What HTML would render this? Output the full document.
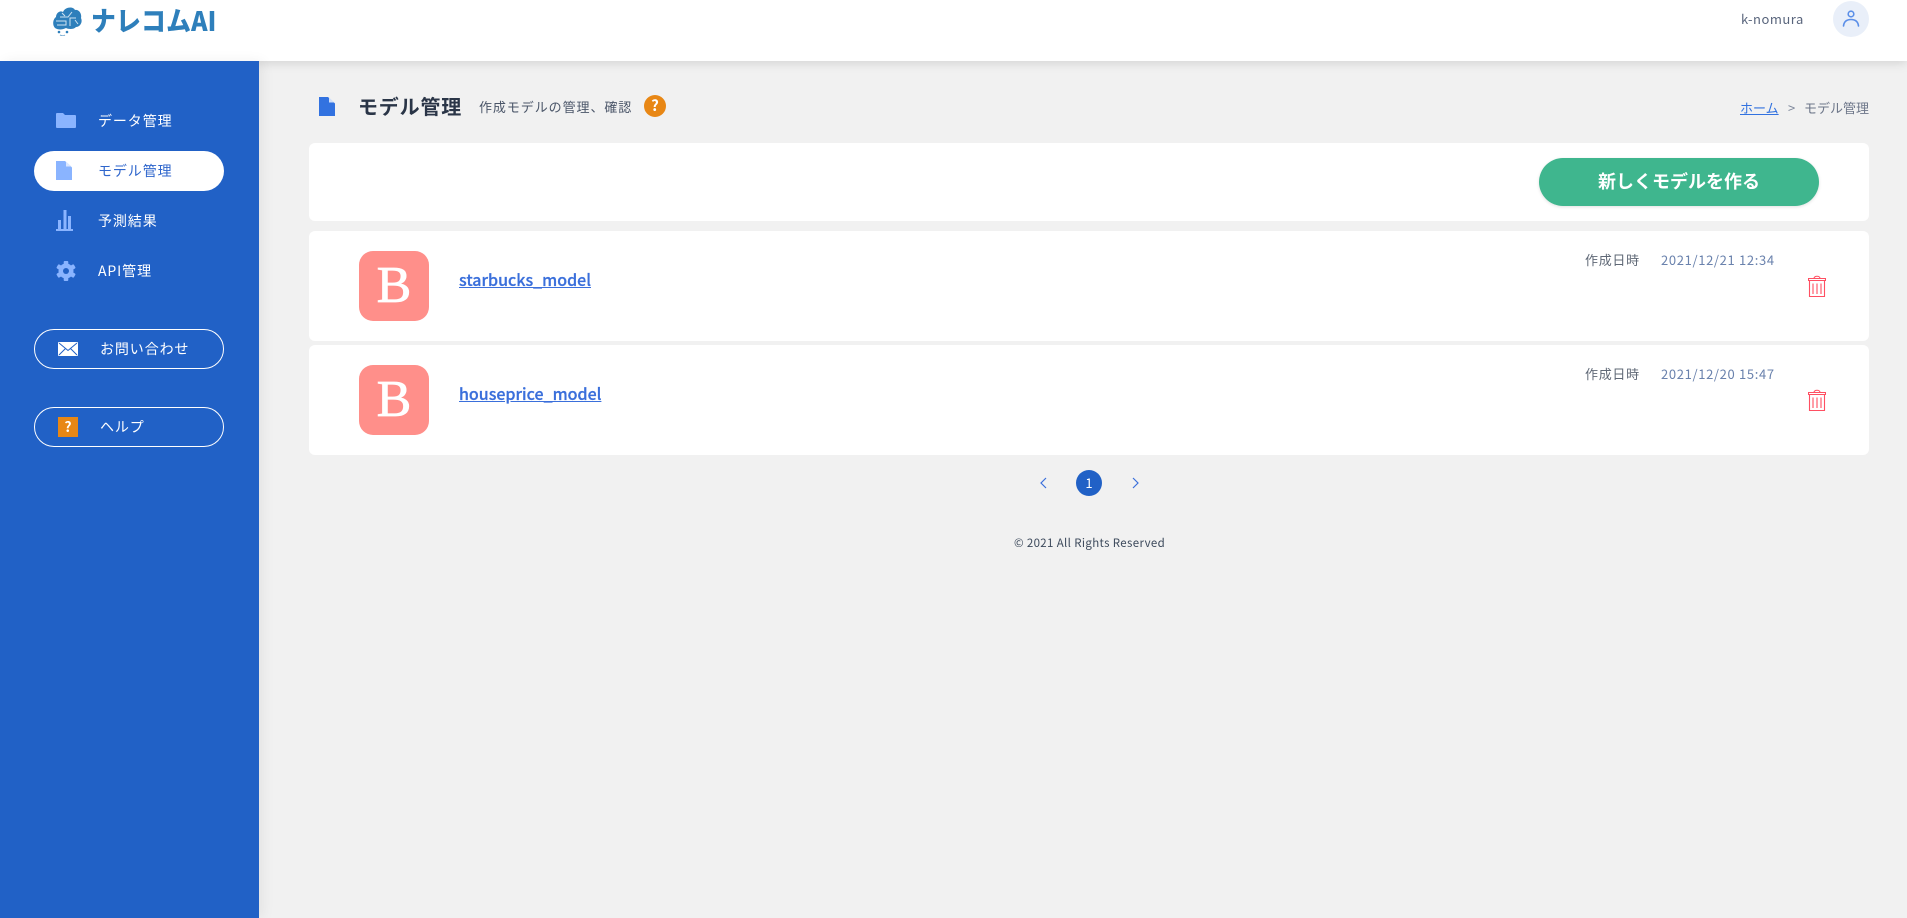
<!DOCTYPE html>
<html lang="ja"><head><meta charset="utf-8"><title>モデル管理</title>
<style>
*{box-sizing:border-box}
html,body{margin:0;padding:0}
body{position:relative;width:1907px;height:918px;overflow:hidden;background:#f1f1f1;font-family:"Noto Sans CJK JP","Liberation Sans",sans-serif;color:#2a3547}
.a{position:absolute;white-space:nowrap;line-height:20px}
svg{position:absolute;display:block}
.card{position:absolute;left:309px;width:1560px;background:#fff;border-radius:6px}
.nav{font-size:14px;letter-spacing:.9px;color:#fff}
.pill{position:absolute;left:34px;width:190px;height:40px;border-radius:20px}
.badge{position:absolute;left:359px;width:70px;height:70px;border-radius:14px;background:#ff8f8a;color:#fff;font:52px/70px "Liberation Serif",serif;text-align:center;-webkit-text-stroke:.7px #fff}
.link{font-size:16px;font-weight:500;color:#3a6fdb;text-decoration:underline;-webkit-text-stroke:.25px #3a6fdb}
.lab{font-size:13px;letter-spacing:.7px;color:#5f6876}
.date{font-size:13px;letter-spacing:.65px;color:#6a82ad}
</style></head><body>

<div class="a" style="left:0;top:0;width:1907px;height:61px;background:#fff;box-shadow:0 2px 10px rgba(0,0,0,.13)"></div>
<div class="a" style="left:0;top:61px;width:259px;height:857px;background:#2161c6;box-shadow:4px 0 12px rgba(0,0,0,.06)"></div>

<svg style="left:53px;top:7px" width="29" height="29" viewBox="0 0 29 29"><path d="M2 21C-1 18 0 12 3 10 3 6 7 3 10 5 12 0 20-1 22 3 26 2 29 7 28 11 30 15 27 20 23 20 20 23 15 22 13 21 9 23 5 23 2 21Z" fill="#2e7fbb"/><path d="M3 14H13V18H4M7 10H15L19 5M17 19V11H23M22 13 25 17M9 6 12 9" fill="none" stroke="#cfe3f2" stroke-width="1"/><circle cx="6" cy="25" r="1.300" fill="#2e7fbb"/><circle cx="14" cy="25" r="1.300" fill="#2e7fbb"/><path d="M7 28Q10 29.500 12 28" stroke="#7fb1d6" fill="none"/></svg>
<div class="a" style="left:91px;top:6px;line-height:28px;font-size:27px;font-weight:900;color:#2e7fbb;letter-spacing:.2px;transform:scaleX(.92);transform-origin:0 50%">ナレコムAI</div>

<div class="a" style="left:1741px;top:9px;font-size:13px;letter-spacing:.5px;color:#59657c">k-nomura</div>
<div class="a" style="left:1833px;top:1px;width:36px;height:36px;border-radius:50%;background:#e9eff9"></div>
<svg style="left:1841px;top:9px" width="20" height="20" viewBox="0 0 20 20" fill="none" stroke="#5b8fe8" stroke-width="1.600"><circle cx="10" cy="5" r="2.800"/><path d="M2.500 17C3 12.500 6 10.500 10 10.500S17 12.500 17.500 17" stroke-linecap="round"/></svg>

<svg style="left:56px;top:113px" width="20" height="15" viewBox="0 0 20 15"><path d="M1 0H7L9 2H19Q20 2 20 3V14Q20 15 19 15H1Q0 15 0 14V1Q0 0 1 0Z" fill="#8ab4ff"/></svg>
<div class="a nav" style="left:98px;top:111px">データ管理</div>

<div class="pill" style="top:151px;background:#fff"></div>
<svg style="left:56px;top:161px" width="16" height="19" viewBox="0 0 16 19"><path d="M0 0H9L16 6.500V19H0Z" fill="#8ab4ff"/><path d="M10 .5 15.500 5.500H10Z" fill="#dbe7ff"/></svg>
<div class="a nav" style="left:98px;top:161px;color:#2f66cc">モデル管理</div>

<svg style="left:56px;top:210px" width="17" height="21" viewBox="0 0 17 21" fill="#8ab4ff"><rect x="2" y="10" width="3" height="9"/><rect x="7.500" y="0" width="3" height="19"/><rect x="12" y="6" width="3" height="13"/><rect x="0" y="19" width="17" height="2"/></svg>
<div class="a nav" style="left:98px;top:211px">予測結果</div>

<svg style="left:56px;top:261px" width="20" height="20" viewBox="0 0 20 20"><g fill="#8ab4ff"><circle cx="10" cy="10" r="7.500"/><rect x="7.700" y="0" width="4.600" height="20" rx="1"/><rect x="7.700" y="0" width="4.600" height="20" rx="1" transform="rotate(60 10 10)"/><rect x="7.700" y="0" width="4.600" height="20" rx="1" transform="rotate(120 10 10)"/></g><circle cx="10" cy="10" r="3" fill="#2161c6"/></svg>
<div class="a nav" style="left:98px;top:261px">API管理</div>

<div class="pill" style="top:329px;border:1px solid #fff"></div>
<svg style="left:58px;top:342px" width="20" height="14" viewBox="0 0 20 14"><rect width="20" height="14" rx="1" fill="#fff"/><path d="M1 1 10 8.500 19 1M1 13 7.500 6.500M19 13 12.500 6.500" fill="none" stroke="#2161c6" stroke-width="1"/></svg>
<div class="a nav" style="left:100px;top:339px">お問い合わせ</div>

<div class="pill" style="top:407px;border:1px solid #fff"></div>
<div class="a" style="left:58px;top:417px;width:20px;height:20px;background:#e88715;color:#fff;font-size:14px;font-weight:700;line-height:20px;text-align:center">?</div>
<div class="a nav" style="left:100px;top:417px">ヘルプ</div>

<svg style="left:319px;top:97px" width="16" height="19" viewBox="0 0 16 19"><path d="M0 0H9L16 6.500V19H0Z" fill="#3272e0"/><path d="M10 .5 15.500 5.500H10Z" fill="#cfdffa"/></svg>
<div class="a" style="left:358px;top:96px;font-size:20px;font-weight:700;letter-spacing:.8px;color:#2a3547">モデル管理</div>
<div class="a" style="left:479px;top:97px;font-size:13px;letter-spacing:.93px;color:#4a5568">作成モデルの管理、確認</div>
<div class="a" style="left:644px;top:95px;width:22px;height:22px;border-radius:50%;background:#e88715;color:#fff;font-size:15px;font-weight:700;line-height:22px;text-align:center">?</div>

<div class="a" style="left:1740px;top:98px;font-size:13px;color:#3272e0;text-decoration:underline">ホーム</div>
<div class="a" style="left:1788px;top:98px;font-size:13px;color:#7a8499">&gt;</div>
<div class="a" style="left:1804px;top:98px;font-size:13px;color:#6d7689">モデル管理</div>

<div class="card" style="top:143px;height:78px"></div>
<div class="a" style="left:1539px;top:158px;width:280px;height:48px;border-radius:24px;background:#3fb68e;box-shadow:0 1px 3px rgba(0,0,0,.12);color:#fff;font-size:18px;font-weight:700;line-height:46px;text-align:center">新しくモデルを作る</div>

<div class="card" style="top:231px;height:110px"></div>
<div class="badge" style="top:251px">B</div>
<div class="a link" style="left:459px;top:269px">starbucks_model</div>
<div class="a lab" style="left:1585px;top:250px">作成日時</div>
<div class="a date" style="left:1661px;top:250px">2021/12/21 12:34</div>
<svg style="left:1808px;top:275px" width="18" height="22" viewBox="0 0 18 22" fill="none" stroke="#ff4f62" stroke-width="1.100"><path d="M.5 5.500V3.500H17.500V5.500ZM6 3.500C6 .5 12 .5 12 3.500M1.500 5.500V21.500H16.500V5.500M5 8.500V19M9 8.500V19M13 8.500V19"/></svg>

<div class="card" style="top:345px;height:110px"></div>
<div class="badge" style="top:365px">B</div>
<div class="a link" style="left:459px;top:383px">houseprice_model</div>
<div class="a lab" style="left:1585px;top:364px">作成日時</div>
<div class="a date" style="left:1661px;top:364px">2021/12/20 15:47</div>
<svg style="left:1808px;top:389px" width="18" height="22" viewBox="0 0 18 22" fill="none" stroke="#ff4f62" stroke-width="1.100"><path d="M.5 5.500V3.500H17.500V5.500ZM6 3.500C6 .5 12 .5 12 3.500M1.500 5.500V21.500H16.500V5.500M5 8.500V19M9 8.500V19M13 8.500V19"/></svg>

<svg style="left:1040px;top:477px" width="7" height="12" viewBox="0 0 7 12" fill="none" stroke="#3a6fdb" stroke-width="1.200"><path d="M6 1 1 6 6 11"/></svg>
<div class="a" style="left:1076px;top:470px;width:26px;height:26px;border-radius:50%;background:#2161c6;color:#fff;font-size:13px;line-height:26px;text-align:center">1</div>
<svg style="left:1132px;top:477px" width="7" height="12" viewBox="0 0 7 12" fill="none" stroke="#3a6fdb" stroke-width="1.200"><path d="M1 1 6 6 1 11"/></svg>

<div class="a" style="left:1014px;top:533px;font-size:11.500px;letter-spacing:.35px;color:#3d4a5c">© 2021 All Rights Reserved</div>
</body></html>
